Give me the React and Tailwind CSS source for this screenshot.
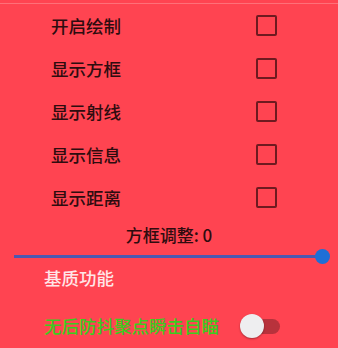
import React from "react";

const options = ["开启绘制", "显示方框", "显示射线", "显示信息", "显示距离"];

const App = () => {
  return (
    <div
      className="w-[338px] h-[348px] overflow-hidden bg-[#ff4451] flex flex-col"
      style={{ fontFamily: '"Noto Sans CJK SC", "Noto Sans", sans-serif' }}
    >
      {/* top edge */}
      <div className="h-[3px]" />
      <div className="h-px bg-[#ff7078]" />

      {/* checkbox rows */}
      {options.map((label) => (
        <div key={label} className="h-[43px] flex items-center pl-[51px] pr-[61px]">
          <span className="text-[17.5px] font-medium leading-none text-[#2e0c0f]">{label}</span>
          <span className="ml-auto w-[21px] h-[21px] border-[2.5px] border-[#6e1a20] rounded-[2px]" />
        </div>
      ))}

      {/* slider */}
      <div className="h-[30px] flex items-center justify-center">
        <span className="text-[17px] font-medium leading-none text-[#2e0c0f]">方框调整: 0</span>
      </div>
      <div className="h-[14px] flex items-center pl-[14px] pr-[8px]">
        <div className="flex-1 h-[3px] bg-[#4d58b0]" />
        <div className="w-[15px] h-[15px] -ml-[7px] rounded-full bg-[#1f6fd6]" />
      </div>

      {/* section title */}
      <div className="h-[30px] flex items-center pl-[44px]">
        <span className="text-[17.5px] font-medium leading-none text-[#ffe6e8]">基质功能</span>
      </div>

      {/* switch row */}
      <div className="mt-[11px] h-[44px] flex items-center pl-[44px]">
        <span className="text-[17.5px] font-medium leading-none text-[#3ccb1f] w-[196px] whitespace-nowrap">
          无后防抖聚点瞬击自瞄
        </span>
        <div className="relative w-[40px] h-[24px] flex items-center">
          <div className="ml-[5px] w-[35px] h-[15px] rounded-full bg-[#b8323c]" />
          <div className="absolute left-0 top-0 w-[24px] h-[24px] rounded-full bg-[#eeeef0] shadow-[0_1px_2px_rgba(0,0,0,0.35)]" />
        </div>
      </div>
    </div>
  );
};

export default App;
